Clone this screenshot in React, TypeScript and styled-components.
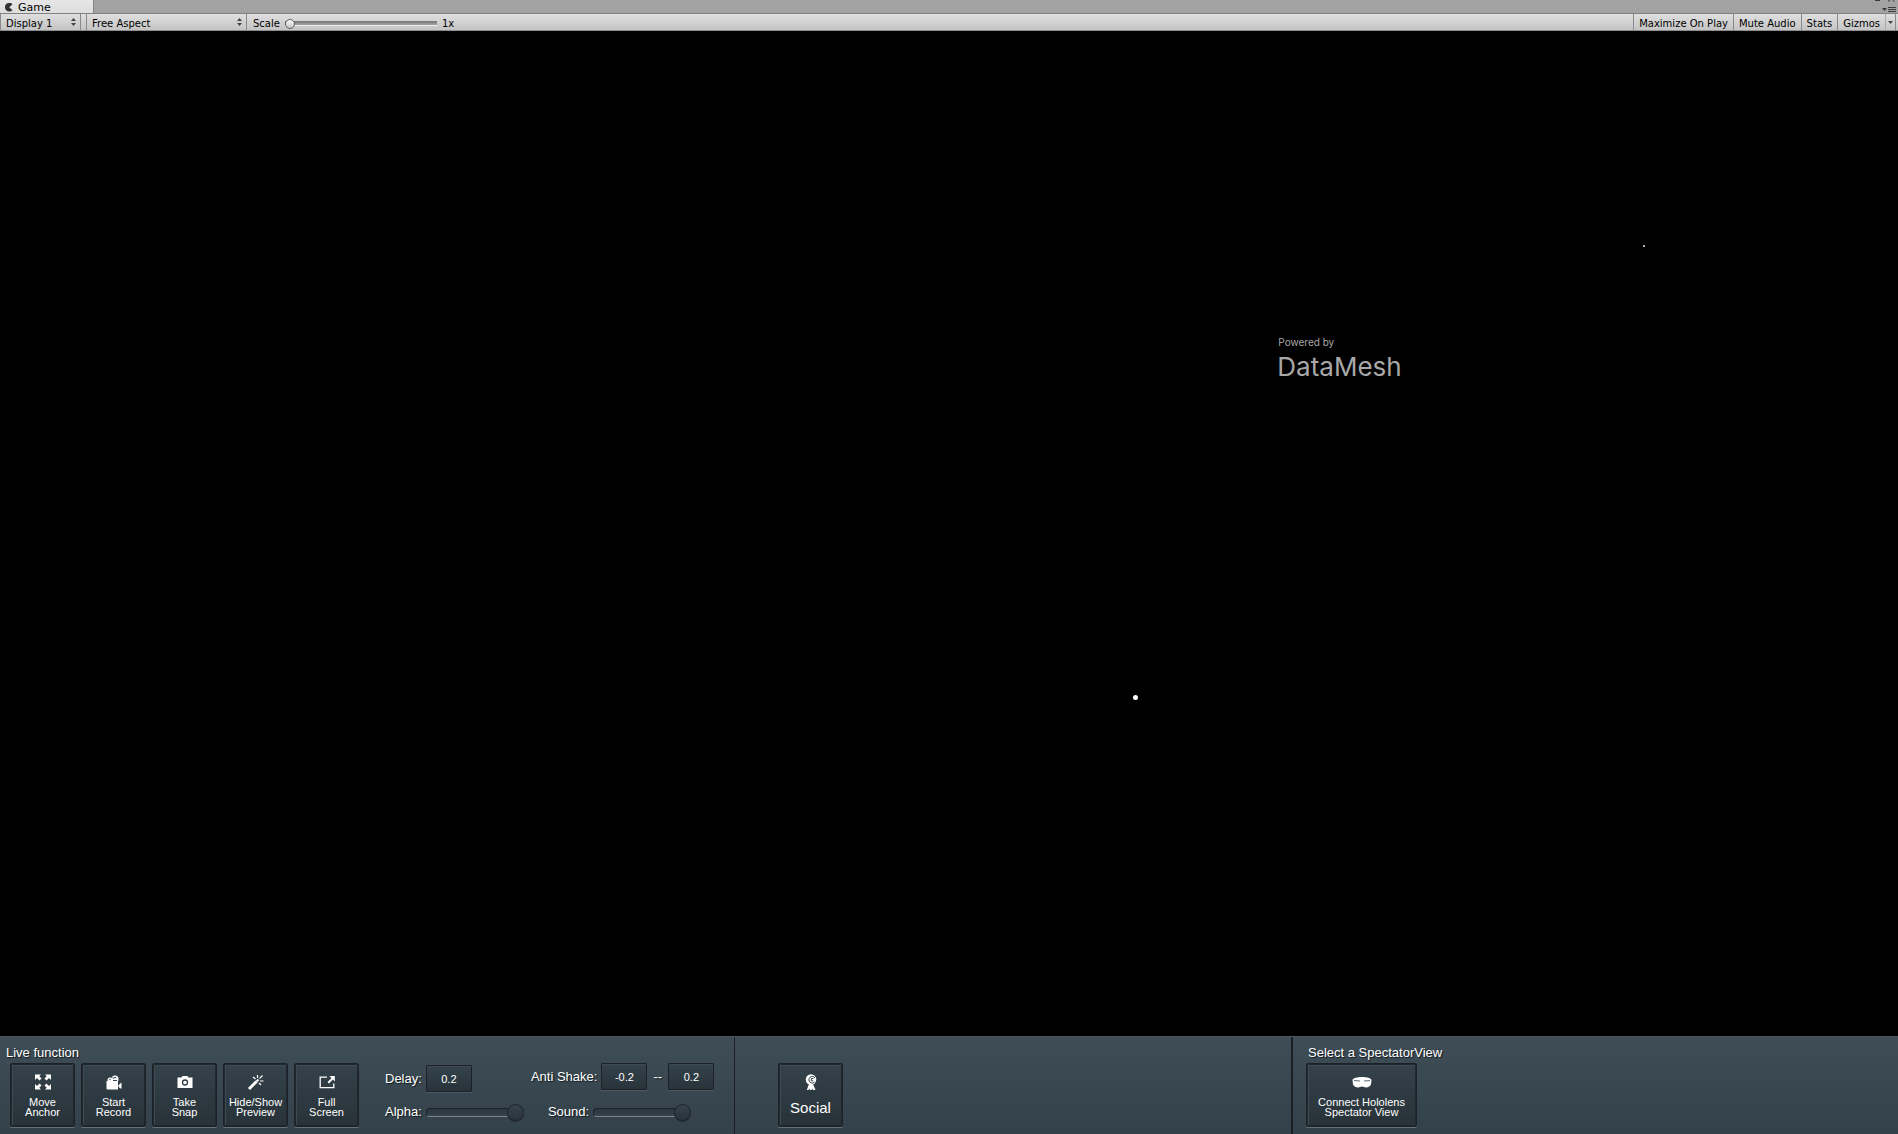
import React, { useState } from "react";
import styled, { createGlobalStyle } from "styled-components";

const GlobalStyle = createGlobalStyle`
  * { box-sizing: border-box; }
  body { margin: 0; background: #000; }
  button, input, select { font: inherit; color: inherit; margin: 0; }
`;

const Window = styled.div`
  display: flex;
  flex-direction: column;
  min-height: 100vh;
  font-family: "Liberation Sans", Arial, sans-serif;
`;

/* ---------- editor chrome ---------- */

const TabStrip = styled.header`
  display: flex;
  justify-content: space-between;
  height: 13px;
  background: #a2a2a2;
  overflow: hidden;
  font: 11px/12px "DejaVu Sans", Verdana, sans-serif;
  color: #000;
`;

const Tab = styled.button`
  display: flex;
  align-items: center;
  gap: 5px;
  width: 94px;
  padding: 2px 0 0 5px;
  border: 0;
  border-right: 1px solid #858585;
  background: linear-gradient(#e6e6e6, #dedede);
  text-align: left;
`;

const WindowMenu = styled.button`
  display: flex;
  padding: 0 2px 0 0;
  border: 0;
  background: none;
`;

const Toolbar = styled.nav`
  display: flex;
  align-items: stretch;
  height: 18px;
  border-top: 1px solid #808080;
  border-bottom: 1px solid #8c8c8c;
  background: linear-gradient(#dfdfdf, #c4c4c4);
  font: 10px/16px "DejaVu Sans", Verdana, sans-serif;
  color: #000;
`;

const PickerBox = styled.div<{ $width: number }>`
  display: flex;
  align-items: center;
  width: ${(p) => p.$width}px;
  padding-right: 4px;
  border-left: 1px solid #8a8a8a;
  border-right: 1px solid #8a8a8a;
`;

const Picker = styled.select`
  flex: 1;
  min-width: 0;
  height: 16px;
  padding: 2px 0 0 5px;
  border: 0;
  outline: 0;
  appearance: none;
  background: transparent;
`;

const Gap = styled.div`
  width: 5px;
`;

const Scale = styled.div`
  display: flex;
  align-items: center;
  gap: 5px;
  padding: 3px 0 0 6px;
`;

const ScaleRange = styled.input`
  width: 152px;
  height: 12px;
  appearance: none;
  background: linear-gradient(#757575, #a0a0a0 75%, #ededed 75%) center / 100% 5px no-repeat;
  &::-webkit-slider-thumb {
    appearance: none;
    width: 10px;
    height: 10px;
    border: 1px solid #5c5c5c;
    border-radius: 50%;
    background: linear-gradient(#fafafa, #c4c4c4);
  }
`;

const ToolGroup = styled.div`
  display: flex;
  margin-left: auto;
  padding-right: 2px;
`;

const Tool = styled.button`
  padding: 2px 5px 0;
  border: 0;
  border-left: 1px solid #8a8a8a;
  background: none;
  white-space: nowrap;
`;

const ArrowTool = styled.button`
  display: flex;
  align-items: center;
  justify-content: center;
  width: 11px;
  padding: 0;
  border: 0;
  border-left: 1px solid #aaa;
  border-right: 1px solid #8a8a8a;
  background: none;
`;

/* ---------- scene ---------- */

const Scene = styled.main`
  position: relative;
  flex: 1;
  background: #000;
  overflow: hidden;
`;

const Watermark = styled.div`
  position: absolute;
  left: 67.3%;
  top: 30.2%;
  font-family: Inter, Roboto, sans-serif;
  color: #a8a8a8;
`;

const Powered = styled.div`
  padding-left: 1px;
  font-size: 10px;
  line-height: 14px;
`;

const Brand = styled.div`
  font-size: 26px;
  line-height: 36px;
`;

const Marker = styled.i<{ $x: number; $y: number; $size: number }>`
  position: absolute;
  left: ${(p) => p.$x}%;
  top: ${(p) => p.$y}%;
  width: ${(p) => p.$size}px;
  height: ${(p) => p.$size}px;
  border-radius: ${(p) => (p.$size > 2 ? "50%" : "0")};
  background: ${(p) => (p.$size > 2 ? "#fff" : "#aaa")};
`;

/* ---------- live panel ---------- */

const Panel = styled.footer`
  display: grid;
  grid-template-columns: 735fr 558fr 605fr;
  background: linear-gradient(#3f4d56, #33414a);
  border-top: 1px solid #4b5860;
  color: #fff;
  font-size: 13px;
  line-height: 16px;
  text-shadow: 1px 1px 1px #10181d;
`;

const Section = styled.section<{ $divider?: number; $indent: number }>`
  padding: 8px 0 7px ${(p) => p.$indent}px;
  border-right: ${(p) => p.$divider ?? 0}px solid #1c2023;
`;

const Heading = styled.h2<{ $indent?: number }>`
  min-height: 16px;
  margin: 0 0 2px;
  padding-left: ${(p) => p.$indent ?? 0}px;
  font-size: 13px;
  font-weight: 400;
`;

const Row = styled.div`
  display: flex;
  align-items: flex-start;
  padding-left: 4px;
`;

const Tiles = styled.div`
  display: flex;
  gap: 6px;
`;

const Tile = styled.button<{ $wide?: boolean; $large?: boolean }>`
  display: flex;
  flex-direction: column;
  align-items: center;
  gap: ${(p) => (p.$large ? 9 : 6)}px;
  width: ${(p) => (p.$wide ? 111 : 65)}px;
  height: 64px;
  padding: 9px 0 0;
  border: 1px solid #1b2126;
  border-radius: 2px;
  background: linear-gradient(#34424b, #283238);
  box-shadow: inset 0 0 0 1px #22292e, inset 2px 2px 0 #3e4a51, 0 1px 0 #66727a;
  font-size: ${(p) => (p.$large ? 15 : 11)}px;
  line-height: ${(p) => (p.$large ? 16 : 10)}px;
  text-shadow: none;
  white-space: pre;
`;

const Controls = styled.div`
  display: flex;
  gap: 8px;
  margin-left: 26px;
`;

const ControlColumn = styled.div<{ $top: number }>`
  display: flex;
  flex-direction: column;
  gap: ${(p) => 13 - p.$top}px;
  padding-top: ${(p) => p.$top}px;
`;

const Field = styled.div<{ $indent?: number }>`
  display: flex;
  align-items: center;
  gap: 4px;
  padding-left: ${(p) => p.$indent ?? 0}px;
  white-space: pre;
`;

const Value = styled.input`
  width: 46px;
  height: 27px;
  padding: 0;
  border: 1px solid #1b2126;
  border-radius: 1px;
  outline: 0;
  background: linear-gradient(#34434c, #28333a);
  box-shadow: inset 0 1px 0 #3d4a52, 0 1px 0 #4d5a62;
  font-size: 11px;
  text-align: center;
  text-shadow: none;
`;

const Dash = styled.span`
  width: 13px;
  text-align: center;
`;

const Groove = styled.div`
  display: flex;
  align-items: center;
  width: 91px;
  height: 9px;
  margin: 5px 6px 4px 0;
  border: 1px solid #1d2429;
  border-bottom-color: #7b858b;
  border-radius: 4px;
  background: linear-gradient(#2b363d, #34424b);
`;

const Range = styled.input`
  flex: none;
  width: 97px;
  height: 18px;
  appearance: none;
  background: transparent;
  &::-webkit-slider-thumb {
    appearance: none;
    width: 17px;
    height: 17px;
    border: 1px solid #1d2429;
    border-radius: 50%;
    background: linear-gradient(#34424b, #29343b);
    box-shadow: 0 1px 0 #20282d;
  }
`;

/* ---------- icons ---------- */

const UpDown = () => (
  <svg width="5" height="8" viewBox="0 0 5 8" fill="#444" aria-hidden="true">
    <path d="M2.5 0 5 3H0zM2.5 8 0 5h5z" />
  </svg>
);

const GameIcon = () => (
  <svg width="8" height="10" viewBox="0 0 8 10" fill="#333" aria-hidden="true">
    <path d="M7.5 1.2A4.4 4.4 0 1 0 7.5 7.2L4.3 4.2z" />
  </svg>
);

const MenuIcon = () => (
  <svg width="22" height="13" viewBox="0 0 22 13" fill="none" stroke="#3b3b3b" aria-hidden="true">
    <path d="M1 .5h5M14 1.5l2-1.5M20.5 1.5L18.5 0" />
    <path d="M14 7.5h8M14 9.5h8M14 11.5h8" />
    <path d="M8 8h5l-2.5 3z" fill="#3b3b3b" stroke="none" />
  </svg>
);

const MoveIcon = () => (
  <svg width="18" height="18" viewBox="0 0 18 18" aria-hidden="true">
    <path
      fill="#fff"
      d="M1 1.5h6L5.3 3.2 7.5 5.5 5.5 7.5 3 5 1 7zM17 1.5h-6l1.7 1.7-2.2 2.3 2 2L15 5l2 2zM1 16.5h6l-1.7-1.7 2.2-2.3-2-2L3 13l-2-2zM17 16.5h-6l1.7-1.7-2.2-2.3 2-2L15 13l2-2z"
    />
  </svg>
);

const RecordIcon = () => (
  <svg width="18" height="18" viewBox="0 0 18 18" aria-hidden="true">
    <g fill="#fff">
      <path d="M1.5 8h11.5v8.5h-10.5a1 1 0 0 1-1-1zM13.5 12l3-2.5v6.5l-3-2z" />
      <circle cx="5" cy="7" r="2.5" />
      <circle cx="10" cy="6" r="3.5" />
    </g>
    <path d="M7.5 4.5l1.5 1 1-1.5 1.5 1M8 7.5h4" stroke="#34424b" fill="none" />
    <circle cx="5" cy="6.5" r=".7" fill="#34424b" />
  </svg>
);

const CameraIcon = () => (
  <svg width="18" height="18" viewBox="0 0 18 18" aria-hidden="true">
    <path fill="#fff" d="M1.5 4.5h4l1-1.5h5l1 1.5h4v10.5h-15z" />
    <circle cx="9" cy="9.5" r="2.5" fill="none" stroke="#303c44" strokeWidth="1.3" />
  </svg>
);

const WandIcon = () => (
  <svg width="18" height="18" viewBox="0 0 18 18" stroke="#fff" fill="none" aria-hidden="true">
    <path d="M2 16 9.5 8.5" strokeWidth="3" />
    <path d="M9.5 8.5l2-2" strokeWidth="2" />
    <path d="M10.5 2v3M6 4l2.5 2M15.5 2.5 12.5 5.5M13 8h3.5M12 10l2 2" strokeWidth="1.2" />
  </svg>
);

const FullIcon = () => (
  <svg width="18" height="18" viewBox="0 0 18 18" aria-hidden="true">
    <path d="M9 4.2H2.2v10.5h13.6V10.5" fill="none" stroke="#fff" strokeWidth="1.3" />
    <path d="M16.8 3v5.5l-1.9-1.9-3.9 4-1.5-1.5 4-3.9L11.4 3z" fill="#fff" />
  </svg>
);

const SocialIcon = () => (
  <svg width="18" height="18" viewBox="0 0 18 18" aria-hidden="true">
    <g fill="#fff">
      <circle cx="9" cy="6.5" r="5.3" />
      <path d="M7 11h4l2.5 6h-2.5l-.7-1.5-.8 1.5H8l-.8-1.5L6.5 17H4.8z" />
    </g>
    <path
      d="M13 5A3.3 3.3 0 1 0 13 8.5M11.3 5.5h-2v2.3h2"
      fill="none"
      stroke="#34424b"
    />
  </svg>
);

const HeadsetIcon = () => (
  <svg width="20" height="18" viewBox="0 0 20 18" aria-hidden="true">
    <path
      fill="#fff"
      d="M.5 7C1 5 5 4 10 4s9 1 9.5 3l-.5 4.5c-.5 1.5-2.5 3-5 3-1.8 0-2.5-1-4-1s-2.2 1-4 1c-2.5 0-4.5-1.5-5-3z"
    />
    <path d="M2 7.5l6 .5M12 8l6-.5" stroke="#34424b" strokeWidth=".8" />
  </svg>
);

const liveActions = [
  { label: "Move\nAnchor", Icon: MoveIcon },
  { label: "Start\nRecord", Icon: RecordIcon },
  { label: "Take\nSnap", Icon: CameraIcon },
  { label: "Hide/Show\nPreview", Icon: WandIcon },
  { label: "Full\nScreen", Icon: FullIcon },
];

function PanelSlider({ id }: { id: string }) {
  return (
    <Groove>
      <Range id={id} type="range" min={0} max={100} defaultValue={100} />
    </Groove>
  );
}

export default function App() {
  const [scale, setScale] = useState(1);

  return (
    <Window>
      <GlobalStyle />
      <TabStrip>
        <Tab>
          <GameIcon />
          Game
        </Tab>
        <WindowMenu aria-label="Window menu">
          <MenuIcon />
        </WindowMenu>
      </TabStrip>

      <Toolbar>
        <PickerBox $width={81}>
          <Picker aria-label="Display">
            <option>Display 1</option>
          </Picker>
          <UpDown />
        </PickerBox>
        <Gap />
        <PickerBox $width={161}>
          <Picker aria-label="Aspect">
            <option>Free Aspect</option>
          </Picker>
          <UpDown />
        </PickerBox>
        <Scale>
          <label htmlFor="scale">Scale</label>
          <ScaleRange
            id="scale"
            type="range"
            min={1}
            max={5}
            value={scale}
            onChange={(e) => setScale(Number(e.target.value))}
          />
          <span>{scale}x</span>
        </Scale>
        <ToolGroup>
          <Tool>Maximize On Play</Tool>
          <Tool>Mute Audio</Tool>
          <Tool>Stats</Tool>
          <Tool>Gizmos</Tool>
          <ArrowTool aria-label="Gizmos menu">
            <svg width="5" height="3" viewBox="0 0 5 3" fill="#444">
              <path d="M0 0h5L2.5 3z" />
            </svg>
          </ArrowTool>
        </ToolGroup>
      </Toolbar>

      <Scene>
        <Marker $x={86.55} $y={21.3} $size={2} />
        <Marker $x={59.7} $y={66.1} $size={5} />
        <Watermark>
          <Powered>Powered by</Powered>
          <Brand>DataMesh</Brand>
        </Watermark>
      </Scene>

      <Panel>
        <Section $divider={1} $indent={6}>
          <Heading>Live function</Heading>
          <Row>
            <Tiles>
              {liveActions.map(({ label, Icon }) => (
                <Tile key={label}>
                  <Icon />
                  {label}
                </Tile>
              ))}
            </Tiles>
            <Controls>
              <ControlColumn $top={2}>
                <Field>
                  <label htmlFor="delay">Delay:</label>
                  <Value id="delay" defaultValue="0.2" />
                </Field>
                <Field>
                  <label htmlFor="alpha">Alpha:</label>
                  <PanelSlider id="alpha" />
                </Field>
              </ControlColumn>
              <ControlColumn $top={0}>
                <Field>
                  <label htmlFor="shake-min">Anti Shake:</label>
                  <Value id="shake-min" defaultValue="-0.2" />
                  <Dash>--</Dash>
                  <Value aria-label="Anti Shake maximum" defaultValue="0.2" />
                </Field>
                <Field $indent={17}>
                  <label htmlFor="sound">Sound:</label>
                  <PanelSlider id="sound" />
                </Field>
              </ControlColumn>
            </Controls>
          </Row>
        </Section>

        <Section $divider={2} $indent={43}>
          <Heading as="div" />
          <Tile $large>
            <SocialIcon />
            Social
          </Tile>
        </Section>

        <Section $indent={13}>
          <Heading $indent={2}>Select a SpectatorView</Heading>
          <Tile $wide>
            <HeadsetIcon />
            {"Connect Hololens\nSpectator View"}
          </Tile>
        </Section>
      </Panel>
    </Window>
  );
}
